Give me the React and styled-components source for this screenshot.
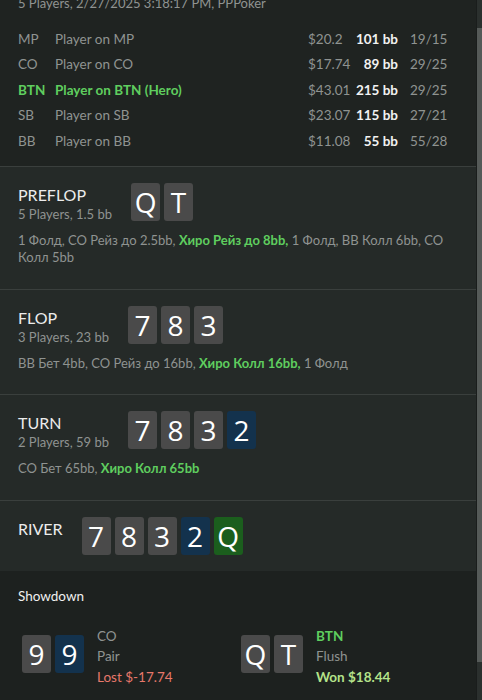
import React from "react";
import styled, { createGlobalStyle } from "styled-components";

const GlobalStyle = createGlobalStyle`
  html, body { margin: 0; padding: 0; background: #1e2220; }
  body { font-family: Lato, "Noto Sans", sans-serif; -webkit-font-smoothing: antialiased; }
  * { box-sizing: border-box; }
`;

const Page = styled.div`
  display: flex;
  height: 700px;
  overflow: hidden;
  background: #1e2220;
`;

const Main = styled.div`
  flex: 1;
  display: flex;
  flex-direction: column;
  min-width: 0;
`;

const ScrollTrack = styled.div`
  width: 6px;
  background: #2b302e;
  padding-top: 28px;
  border-left: 1px solid #1a1d1c;
`;

const ScrollThumb = styled.div`
  height: 634px;
  background: #555a58;
`;

const PlayersSection = styled.section`
  background: #1f2321;
  padding: 0 0 12px 18px;
  border-bottom: 1px solid #3a3f3d;
`;

const Header = styled.div`
  font-size: 13px;
  line-height: 18px;
  color: #8f9391;
  margin-top: -6px;
  margin-bottom: 14px;
`;

const PlayerGrid = styled.div`
  display: grid;
  grid-template-columns: 37px 253px 44px 58px auto;
  grid-auto-rows: 25.5px;
  align-items: center;
  font-size: 13.5px;
`;

const Cell = styled.div`
  color: ${(p) => (p.$hero ? "#5fce5f" : p.$strong ? "#f2f2f2" : "#8f9391")};
  font-weight: ${(p) => (p.$hero || p.$strong ? 700 : 400)};
  text-align: ${(p) => (p.$right ? "right" : "left")};
  padding-right: ${(p) => (p.$right ? "12px" : "0")};
  white-space: nowrap;
`;

const Street = styled.section`
  background: #252a28;
  border-bottom: ${(p) => (p.$last ? "none" : "1px solid #3a3f3d")};
  padding: 16px 18px ${(p) => (p.$last ? "16px" : "22px")} 18px;
`;

const StreetHead = styled.div`
  display: flex;
  align-items: flex-start;
  gap: 19px;
`;

const StreetInfo = styled.div`
  padding-top: 2px;
  display: flex;
  flex-direction: column;
`;

const StreetTitle = styled.div`
  font-size: 16px;
  line-height: 20px;
  color: #ececec;
`;

const StreetSub = styled.div`
  font-size: 13px;
  line-height: 18px;
  color: #8f9391;
`;

const CardRow = styled.div`
  display: flex;
  gap: 4px;
`;

const cardColors = {
  gray: "#4a4a4a",
  blue: "#13324d",
  green: "#1b5e1d",
};

const Card = styled.div`
  width: 29px;
  height: 38px;
  border-radius: 3px;
  background: ${(p) => cardColors[p.$color || "gray"]};
  color: #ffffff;
  font-size: 28px;
  line-height: 38px;
  text-align: center;
  font-family: "Open Sans", "Noto Sans", sans-serif;
`;

const Actions = styled.div`
  margin-top: 9px;
  font-size: 13px;
  line-height: 17.5px;
  color: #8f9391;
`;

const Hero = styled.span`
  color: #5fce5f;
  font-weight: 700;
`;

const Showdown = styled.section`
  flex: 1;
  background: #1d211f;
  padding: 16px 0 0 18px;
`;

const ShowTitle = styled.div`
  font-size: 13.5px;
  line-height: 18px;
  color: #f0f0f0;
  font-weight: 400;
`;

const Hands = styled.div`
  display: grid;
  grid-template-columns: 219px 219px;
  margin-top: 17px;
  padding-left: 4px;
`;

const Hand = styled.div`
  display: flex;
  align-items: center;
  gap: 13px;
`;

const HandInfo = styled.div`
  display: flex;
  flex-direction: column;
  font-size: 13.5px;
  line-height: 20.5px;
  padding-top: 4px;
`;

const InfoLine = styled.div`
  color: ${(p) =>
    p.$tone === "hero" ? "#5fce5f" : p.$tone === "lost" ? "#e7786b" : p.$tone === "won" ? "#b4e38a" : "#8f9391"};
  font-weight: ${(p) => (p.$tone === "hero" || p.$tone === "won" ? 700 : 400)};
`;

const players = [
  { pos: "MP", name: "Player on MP", money: "$20.2", bb: "101 bb", stats: "19/15" },
  { pos: "CO", name: "Player on CO", money: "$17.74", bb: "89 bb", stats: "29/25" },
  { pos: "BTN", name: "Player on BTN (Hero)", money: "$43.01", bb: "215 bb", stats: "29/25", hero: true },
  { pos: "SB", name: "Player on SB", money: "$23.07", bb: "115 bb", stats: "27/21" },
  { pos: "BB", name: "Player on BB", money: "$11.08", bb: "55 bb", stats: "55/28" },
];

const Cards = ({ cards }) => (
  <CardRow>
    {cards.map(([r, c], i) => (
      <Card key={i} $color={c}>
        {r}
      </Card>
    ))}
  </CardRow>
);

const board = [["7"], ["8"], ["3"], ["2", "blue"], ["Q", "green"]];

export default function App() {
  return (
    <>
      <GlobalStyle />
      <Page>
        <Main>
          <PlayersSection>
            <Header>5 Players, 2/27/2025 3:18:17 PM, PPPoker</Header>
            <PlayerGrid>
              {players.map((p) => (
                <React.Fragment key={p.pos}>
                  <Cell $hero={p.hero}>{p.pos}</Cell>
                  <Cell $hero={p.hero}>{p.name}</Cell>
                  <Cell>{p.money}</Cell>
                  <Cell $strong $right>
                    {p.bb}
                  </Cell>
                  <Cell>{p.stats}</Cell>
                </React.Fragment>
              ))}
            </PlayerGrid>
          </PlayersSection>

          <Street>
            <StreetHead>
              <StreetInfo>
                <StreetTitle>PREFLOP</StreetTitle>
                <StreetSub>5 Players, 1.5 bb</StreetSub>
              </StreetInfo>
              <Cards cards={[["Q"], ["T"]]} />
            </StreetHead>
            <Actions>
              1 Фолд, CO Рейз до 2.5bb, <Hero>Хиро Рейз до 8bb,</Hero> 1 Фолд, BB Колл 6bb, CO Колл 5bb
            </Actions>
          </Street>

          <Street>
            <StreetHead>
              <StreetInfo>
                <StreetTitle>FLOP</StreetTitle>
                <StreetSub>3 Players, 23 bb</StreetSub>
              </StreetInfo>
              <Cards cards={board.slice(0, 3)} />
            </StreetHead>
            <Actions>
              BB Бет 4bb, CO Рейз до 16bb, <Hero>Хиро Колл 16bb,</Hero> 1 Фолд
            </Actions>
          </Street>

          <Street>
            <StreetHead>
              <StreetInfo>
                <StreetTitle>TURN</StreetTitle>
                <StreetSub>2 Players, 59 bb</StreetSub>
              </StreetInfo>
              <Cards cards={board.slice(0, 4)} />
            </StreetHead>
            <Actions>
              CO Бет 65bb, <Hero>Хиро Колл 65bb</Hero>
            </Actions>
          </Street>

          <Street $last>
            <StreetHead>
              <StreetInfo>
                <StreetTitle>RIVER</StreetTitle>
              </StreetInfo>
              <Cards cards={board} />
            </StreetHead>
          </Street>

          <Showdown>
            <ShowTitle>Showdown</ShowTitle>
            <Hands>
              <Hand>
                <Cards cards={[["9"], ["9", "blue"]]} />
                <HandInfo>
                  <InfoLine>CO</InfoLine>
                  <InfoLine>Pair</InfoLine>
                  <InfoLine $tone="lost">Lost $-17.74</InfoLine>
                </HandInfo>
              </Hand>
              <Hand>
                <Cards cards={[["Q"], ["T"]]} />
                <HandInfo>
                  <InfoLine $tone="hero">BTN</InfoLine>
                  <InfoLine>Flush</InfoLine>
                  <InfoLine $tone="won">Won $18.44</InfoLine>
                </HandInfo>
              </Hand>
            </Hands>
          </Showdown>
        </Main>
        <ScrollTrack>
          <ScrollThumb />
        </ScrollTrack>
      </Page>
    </>
  );
}
